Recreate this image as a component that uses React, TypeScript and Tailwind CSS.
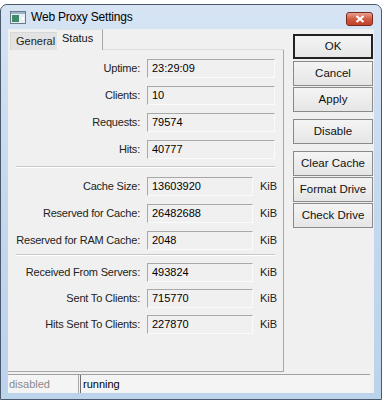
const groups: { label: string; value: string; unit?: boolean }[][] = [
  [
    { label: 'Uptime:', value: '23:29:09' },
    { label: 'Clients:', value: '10' },
    { label: 'Requests:', value: '79574' },
    { label: 'Hits:', value: '40777' },
  ],
  [
    { label: 'Cache Size:', value: '13603920', unit: true },
    { label: 'Reserved for Cache:', value: '26482688', unit: true },
    { label: 'Reserved for RAM Cache:', value: '2048', unit: true },
  ],
  [
    { label: 'Received From Servers:', value: '493824', unit: true },
    { label: 'Sent To Clients:', value: '715770', unit: true },
    { label: 'Hits Sent To Clients:', value: '227870', unit: true },
  ],
];

function Row({ label, value, unit }: { label: string; value: string; unit?: boolean }) {
  return (
    <div className="flex items-center h-[19px]">
      <div className="w-[133px] pr-[1px] text-right text-[#222] tracking-[-0.2px]">{label}</div>
      <div
        className={`ml-[6px] h-[19px] flex items-center pl-[4px] text-black border border-t-[#a8a8a8] border-l-[#a8a8a8] border-b-[#fbfbfb] border-r-[#fbfbfb] bg-[#f0f0f0] ${
          unit ? 'w-[106px]' : 'w-[128px]'
        }`}
      >
        {value}
      </div>
      {unit && <div className="ml-[7px] text-[#222]">KiB</div>}
    </div>
  );
}

function Btn({ children, primary }: { children: string; primary?: boolean }) {
  return (
    <div
      className={`h-[25px] flex items-center justify-center bg-gradient-to-b from-[#f4f4f4] to-[#e6e6e6] text-[#111] text-[11.5px] ${
        primary ? 'border-2 border-[#222]' : 'border border-[#8a8a8a]'
      }`}
    >
      {children}
    </div>
  );
}

export default function App() {
  return (
    <div
      className="w-[387px] h-[401px] bg-white overflow-hidden text-[11px]"
      style={{ fontFamily: '"Liberation Sans", Arial, sans-serif' }}
    >
      <div className="mt-[4px] w-[382px] h-[396px] rounded-t-[7px] border border-[#4a5a6c] bg-gradient-to-b from-[#d6e4f4] via-[#c4d8ee] to-[#bcd3ec] flex flex-col px-[7px] pb-[6px]">
        {/* title bar */}
        <div className="h-[23px] flex items-center pl-[2px] pr-[1px]">
          <svg width="16" height="13" viewBox="0 0 16 13" className="mt-[2px]">
            <rect x="0.5" y="0.5" width="15" height="12" fill="#e8eef5" stroke="#6c7a88" />
            <rect x="1" y="1" width="14" height="2" fill="#9fb5cc" />
            <rect x="2" y="4" width="7" height="7" fill="#3f8a6a" />
            <rect x="12" y="6" width="2" height="3" fill="#fff" />
          </svg>
          <div className="ml-[5px] text-[12px] text-black mt-[1px] tracking-[-0.2px]">Web Proxy Settings</div>
          <div className="ml-auto mt-[5px] w-[27px] h-[14px] rounded-[3px] border border-[#7a2a1c] bg-gradient-to-b from-[#e9a192] via-[#d05a42] to-[#c2412a] flex items-center justify-center">
            <svg width="10" height="8" viewBox="0 0 10 8">
              <path d="M1.5 1 L8.5 7 M8.5 1 L1.5 7" stroke="#fff" strokeWidth="2.2" />
            </svg>
          </div>
        </div>

        {/* client area */}
        <div className="mt-[1px] flex-1 bg-[#f0f0f0] flex flex-col">
          <div className="flex-1 flex">
            {/* tab control */}
            <div className="w-[276px] flex flex-col">
              <div className="h-[21px] flex items-end">
                <div className="ml-[2px] h-[18px] w-[47px] bg-[#e3e3e3] border-t border-l border-[#d8d8d8] flex items-center pl-[5px] text-[#222]">
                  General
                </div>
                <div className="h-[21px] w-[46px] border-r border-t border-[#a8a8a8] border-t-[#e0e0e0] bg-[#f0f0f0] flex items-center pl-[5px] pb-[3px] text-[#111]">
                  Status
                </div>
                <div className="flex-1 h-full border-b border-[#dcdcdc]" />
              </div>
              <div className="flex-1 border-r border-b border-[#a8a8a8] pt-[9px] mb-[2px]">
                <div className="flex flex-col gap-[8px]">
                  {groups[0].map((r) => (
                    <Row key={r.label} {...r} />
                  ))}
                </div>
                <div className="mx-[8px] mt-[7px] mb-[9px] border-t border-[#c8c8c8] border-b border-b-white" />
                <div className="flex flex-col gap-[8px]">
                  {groups[1].map((r) => (
                    <Row key={r.label} {...r} />
                  ))}
                </div>
                <div className="mx-[8px] mt-[4px] mb-[7px] border-t border-[#c8c8c8] border-b border-b-white" />
                <div className="flex flex-col gap-[7px]">
                  {groups[2].map((r) => (
                    <Row key={r.label} {...r} />
                  ))}
                </div>
              </div>
            </div>

            {/* buttons */}
            <div className="ml-[9px] mt-[5px] w-[80px] flex flex-col">
              <Btn primary>OK</Btn>
              <div className="mt-[2px] flex flex-col gap-[1px]">
                <Btn>Cancel</Btn>
                <Btn>Apply</Btn>
              </div>
              <div className="mt-[7px]">
                <Btn>Disable</Btn>
              </div>
              <div className="mt-[7px] flex flex-col gap-[1px]">
                <Btn>Clear Cache</Btn>
                <Btn>Format Drive</Btn>
                <Btn>Check Drive</Btn>
              </div>
            </div>
          </div>

          {/* status bar */}
          <div className="h-[19px] mr-[4px] border-t border-[#a0a0a0] bg-[#f4f4f4] flex">
            <div className="w-[71px] pl-[1px] flex items-center text-[#8a8a8a] border-r border-[#a8a8a8]">disabled</div>
            <div className="ml-[1px] flex-1 flex items-center pl-[2px] border-l border-[#707070] text-black">running</div>
          </div>
        </div>
      </div>
    </div>
  );
}
